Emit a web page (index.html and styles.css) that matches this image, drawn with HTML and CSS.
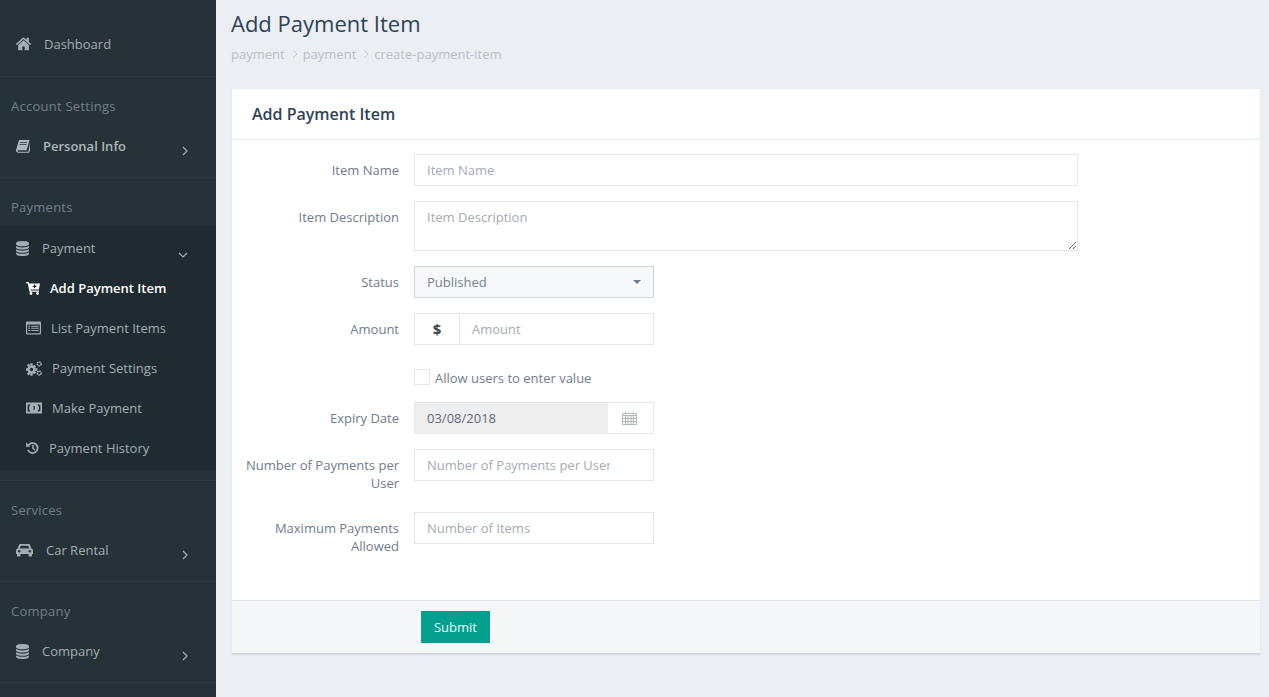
FILE: index.html
```html
<!DOCTYPE html>
<html lang="en">
<head>
<meta charset="utf-8">
<title>Add Payment Item</title>
<link rel="stylesheet" href="styles.css">
</head>
<body>
<div class="app">
  <aside class="sidebar">
    <section class="side-top">
      <a class="nav-item"><svg class="ic w15" viewBox="96 192 1600 1408" preserveAspectRatio="none"><path d="M1472 992v480q0 26-19 45t-45 19h-384v-384h-256v384h-384q-26 0-45-19t-19-45v-480q0-1 .5-3t.5-3l575-474 575 474q1 2 1 6zm223-69l-62 74q-8 9-21 11h-3q-13 0-21-7l-692-577-692 577q-12 8-24 7-13-2-21-11l-62-74q-8-10-7-23.5t11-21.5l719-599q32-26 76-26t76 26l244 204v-195q0-14 9-23t23-9h192q14 0 23 9t9 23v408l219 182q10 8 11 21.5t-7 23.5z"/></svg><span>Dashboard</span></a>
    </section>
    <section class="side-sec">
      <h4 class="side-head">Account Settings</h4>
      <a class="nav-item semi"><svg class="ic w14" viewBox="0 0 14 14"><path d="M3 1h10.5l-.3 1-2.6 9.300H2.400c-.7 0-1 .5-.8 1 .1.300.4.500.8.500h9.400c.3 0 .6-.2.700-.5L14 3v8.500l-1 2.200H2.400C1 13.700 0 12.700 0 11.500c0-.3 0-.5.100-.7zM4.300 3.200l-.2.800h6.800l.2-.8zm-.6 2.100l-.2.800h6.800l.2-.8z" fill-rule="evenodd"/></svg><span>Personal Info</span><svg class="chev" viewBox="0 0 8 10"><path d="M2 1l4 4-4 4"/></svg></a>
    </section>
    <section class="side-sec side-open">
      <h4 class="side-head">Payments</h4>
      <div class="open-block">
        <a class="nav-item"><svg class="ic db" viewBox="128 0 1536 1792" preserveAspectRatio="none"><path d="M896 768q237 0 443-43t325-127v170q0 69-103 128t-280 93.500-385 34.500-385-34.500-280-93.500-103-128v-170q119 84 325 127t443 43zm0 768q237 0 443-43t325-127v170q0 69-103 128t-280 93.500-385 34.500-385-34.500-280-93.500-103-128v-170q119 84 325 127t443 43zm0-384q237 0 443-43t325-127v170q0 69-103 128t-280 93.500-385 34.500-385-34.500-280-93.500-103-128v-170q119 84 325 127t443 43zm0-1152q208 0 385 34.500t280 93.500 103 128v128q0 69-103 128t-280 93.500-385 34.500-385-34.500-280-93.500-103-128v-128q0-69 103-128t280-93.500 385-34.500z"/></svg><span>Payment</span><svg class="chev down" viewBox="0 0 10 8"><path d="M1 2l4 4 4-4"/></svg></a>
        <a class="sub-item active"><svg class="ic w14" viewBox="0 0 14 14"><path d="M0 1h2.600l.5 1.500H14l-1.200 6H4.500l.2 1H13v1.300H3.500L1.700 2.300H0z"/><circle cx="5" cy="12.500" r="1.400"/><circle cx="11.500" cy="12.500" r="1.400"/><path d="M8 3.500h1.200v1.300h1.300V6H9.200v1.300H8V6H6.700V4.800H8z" fill="#1f2b31"/></svg><span>Add Payment Item</span></a>
        <a class="sub-item"><svg class="ic w15" viewBox="0 0 15 13"><path fill-rule="evenodd" d="M1 0h13a1 1 0 0 1 1 1v11a1 1 0 0 1-1 1H1a1 1 0 0 1-1-1V1a1 1 0 0 1 1-1zm.2 3v8.800h12.600V3zM2.300 4.200h2v1h-2zm3 0h7.400v1H5.300zM2.300 6.300h2v1h-2zm3 0h7.400v1H5.300zM2.300 8.400h2v1h-2zm3 0h7.400v1H5.300z"/></svg><span>List Payment Items</span></a>
        <a class="sub-item"><svg class="ic cog" viewBox="0 0 16 15"><g><circle cx="5.500" cy="8.500" r="4.200"/><path d="M4.300 2.300h2.400v2.400H4.300zM4.300 12.300h2.400v2.400H4.300zM-.5 7.300h2.400v2.400H-.5zM9.100 7.300h2.400v2.400H9.100zM.9 4.200l1.700-1.700 1.700 1.700-1.700 1.700zM6.700 11.500l1.700-1.700 1.700 1.700-1.700 1.700zM.9 12.800l1.700 1.700 1.700-1.700-1.700-1.700zM6.700 5.500l1.700 1.700 1.700-1.700-1.700-1.700z"/></g><circle cx="5.500" cy="8.500" r="1.700" fill="#1f2b31"/><circle cx="13.200" cy="2.900" r="1.900" fill="none" stroke="currentColor" stroke-width="1.500" stroke-dasharray="1.500 .5"/><circle cx="13.200" cy="12.100" r="1.900" fill="none" stroke="currentColor" stroke-width="1.500" stroke-dasharray="1.500 .5"/></svg><span>Payment Settings</span></a>
        <a class="sub-item"><svg class="ic w16" viewBox="0 0 16 11"><path fill-rule="evenodd" d="M0 0h16v11H0zm1.800 1.800v7.400h1a1.500 1.500 0 0 0-1-1zM2.500 2a1.500 1.500 0 0 1-.9.900v5.200a1.500 1.500 0 0 1 .9.900H4.500A5.200 5.200 0 0 1 4.500 2zM11.500 2a5.200 5.200 0 0 1 0 7h2a1.500 1.500 0 0 1 .9-.9V2.900a1.500 1.500 0 0 1-.9-.9z"/><ellipse cx="8" cy="5.500" rx="3" ry="3.500"/><path d="M7.500 3.500h1.200v3.800h-1.200z" fill="#1f2b31"/></svg><span>Make Payment</span></a>
        <a class="sub-item"><svg class="ic w13" viewBox="0 0 13 13"><path d="M2.200 4.200A5 5 0 1 1 2 8.500" fill="none" stroke="currentColor" stroke-width="1.800"/><path d="M0 1l4.300 4.200H0z"/><path d="M6.200 3.500h1.500v3.200l1.800 1.200-.8 1.100-2.500-1.700z"/></svg><span>Payment History</span></a>
      </div>
    </section>
    <section class="side-sec">
      <h4 class="side-head">Services</h4>
      <a class="nav-item"><svg class="ic w17" viewBox="0 0 17 13"><path fill-rule="evenodd" d="M4.500 0h8c.8 0 1.400.5 1.700 1.200L15.300 4.500c1 .3 1.700 1.200 1.700 2.300v3.200h-1v1.500a1 1 0 0 1-1 1h-1.500a1 1 0 0 1-1-1V10H4.500v1.500a1 1 0 0 1-1 1H2a1 1 0 0 1-1-1V10H0V6.800c0-1.100.7-2 1.700-2.300L2.800 1.200C3.100.5 3.700 0 4.500 0zm.3 1.700L3.800 4.500h9.400l-1-2.800zM3.200 6a1.300 1.300 0 1 0 0 2.600 1.300 1.300 0 0 0 0-2.600zm10.600 0a1.300 1.300 0 1 0 0 2.600 1.300 1.300 0 0 0 0-2.600z"/></svg><span>Car Rental</span><svg class="chev" viewBox="0 0 8 10"><path d="M2 1l4 4-4 4"/></svg></a>
    </section>
    <section class="side-sec">
      <h4 class="side-head">Company</h4>
      <a class="nav-item"><svg class="ic db" viewBox="128 0 1536 1792" preserveAspectRatio="none"><path d="M896 768q237 0 443-43t325-127v170q0 69-103 128t-280 93.500-385 34.500-385-34.500-280-93.500-103-128v-170q119 84 325 127t443 43zm0 768q237 0 443-43t325-127v170q0 69-103 128t-280 93.500-385 34.500-385-34.500-280-93.500-103-128v-170q119 84 325 127t443 43zm0-384q237 0 443-43t325-127v170q0 69-103 128t-280 93.500-385 34.500-385-34.500-280-93.500-103-128v-170q119 84 325 127t443 43zm0-1152q208 0 385 34.500t280 93.500 103 128v128q0 69-103 128t-280 93.500-385 34.500-385-34.500-280-93.500-103-128v-128q0-69 103-128t280-93.500 385-34.500z"/></svg><span>Company</span><svg class="chev" viewBox="0 0 8 10"><path d="M2 1l4 4-4 4"/></svg></a>
    </section>
  </aside>
  <main class="content">
    <header class="page-head">
      <h1 class="page-title">Add Payment Item</h1>
      <nav class="crumbs"><span>payment</span><svg class="crumb-sep" viewBox="0 0 6 8"><path d="M1.500 .5L5 4 1.500 7.500"/></svg><span>payment</span><svg class="crumb-sep" viewBox="0 0 6 8"><path d="M1.500 .5L5 4 1.500 7.500"/></svg><span>create-payment-item</span></nav>
    </header>
    <div class="card">
      <div class="card-head"><h2 class="card-title">Add Payment Item</h2></div>
      <form class="card-body">
        <div class="row"><label class="lbl">Item Name</label><div class="ctl wide"><input class="inp" placeholder="Item Name"></div></div>
        <div class="row"><label class="lbl">Item Description</label><div class="ctl wide"><textarea class="inp area" placeholder="Item Description"></textarea></div></div>
        <div class="row"><label class="lbl">Status</label><div class="ctl narrow"><div class="select"><span>Published</span><i class="caret"></i></div></div></div>
        <div class="row"><label class="lbl">Amount</label><div class="ctl narrow group"><span class="addon">$</span><input class="inp join-left" placeholder="Amount"></div></div>
        <div class="row check-row"><div class="lbl-empty"></div><label class="check"><span class="box"></span><span>Allow users to enter value</span></label></div>
        <div class="row"><label class="lbl">Expiry Date</label><div class="ctl narrow group"><input class="inp date" value="03/08/2018" readonly><span class="addon cal"><svg class="cal-ic" viewBox="0 0 15 14"><path d="M.5 2.500h14v11H.5zM.5 4.500h14M3.500 .5v3M11.500 .5v3M3.500 4.500v9M6 4.500v9M9 4.500v9M11.500 4.500v9M.5 7.500h14M.5 10.500h14"/></svg></span></div></div>
        <div class="row"><label class="lbl">Number of Payments per User</label><div class="ctl narrow"><input class="inp clip" placeholder="Number of Payments per User"></div></div>
        <div class="row last"><label class="lbl">Maximum Payments Allowed</label><div class="ctl narrow"><input class="inp" placeholder="Number of Items"></div></div>
      </form>
      <div class="card-foot"><button class="btn" type="button">Submit</button></div>
    </div>
  </main>
</div>
</body>
</html>
```

FILE: styles.css
```css
* { box-sizing: border-box; }
html, body { margin: 0; height: 100%; }
body {
  font-family: "Open Sans", "Noto Sans", sans-serif;
  font-size: 13px;
  line-height: 18px;
  background: #ebeef3;
  color: #6b7a8a;
  overflow: hidden;
}
.app { display: flex; height: 697px; }

/* Sidebar */
.sidebar { width: 216px; flex: none; background: #263238; color: #a3adb3; overflow: hidden; }
.side-top { height: 77px; padding-top: 24px; border-bottom: 1px solid #2e3b43; }
.side-sec { padding: 19px 0 11px; border-bottom: 1px solid #2e3b43; }
.side-open { padding-bottom: 10px; }
.side-head { margin: 0 0 10px; height: 20px; padding-left: 11px; font-size: 13px; font-weight: 400; line-height: 20px; letter-spacing: .25px; color: #727f88; }
.side-open .side-head { margin-bottom: 9px; }
.open-block { background: #1f2b31; padding: 2px 0; }
.nav-item { display: flex; align-items: center; height: 40px; padding-left: 16px; gap: 13px; }
.semi { font-weight: 600; color: #aeb7bc; }
.sub-item { display: flex; align-items: center; height: 40px; padding-left: 26px; gap: 10px; }
.active { color: #fff; font-weight: 600; }
.ic { flex: none; fill: currentColor; display: block; }
.w13 { width: 13px; height: 14px; }
.w14 { width: 14px; height: 14px; }
.w15 { width: 15px; height: 14px; }
.w16 { width: 16px; height: 12px; }
.w17 { width: 17px; height: 13px; }
.db { width: 13px; height: 15px; }
.cog { width: 16px; height: 15px; }
.chev { width: 8px; height: 10px; margin-left: auto; margin-right: 27px; margin-top: 9px; fill: none; stroke: #a3adb3; stroke-width: 1.200; }
.chev.down { width: 10px; height: 8px; margin-right: 28px; margin-top: 13px; }

/* Content */
.content { flex: 1; min-width: 0; padding: 0 9px 0 15px; }
.page-head { height: 89px; padding-top: 7px; }
.page-title { margin: 0; font-size: 22px; font-weight: 400; line-height: 32px; color: #2f4356; }
.crumbs { display: flex; align-items: center; margin-top: 6px; color: #b9c0c8; }
.crumb-sep { width: 6px; height: 8px; margin: 0 5px 0 7px; fill: none; stroke: #c3c9d0; stroke-width: 1; }

.card { background: #fff; border-bottom: 1px solid #cfd2d6; box-shadow: 0 1px 1px rgba(0, 0, 0, .08); margin-left: 1px; }
.card-head { height: 51px; border-bottom: 1px solid #e6e9ed; padding: 0 20px; display: flex; align-items: center; }
.card-title { margin: 0; font-size: 16px; font-weight: 600; color: #2f4356; }
.card-body { padding: 14px 0 0; height: 460px; }
.row { display: flex; margin-bottom: 15px; }
.last { margin-bottom: 0; }
.lbl { width: 167px; flex: none; text-align: right; padding: 7px 0 5px; color: #6f7d8c; }
.lbl-empty { width: 167px; flex: none; }
.ctl { margin-left: 15px; }
.wide { width: 664px; }
.narrow { width: 240px; }
.group { display: flex; }
.inp {
  display: block; width: 100%; height: 32px; padding: 0 12px;
  border: 1px solid #e3e6ea; border-radius: 0; background: #fff;
  font: inherit; color: #6f7d8c; outline: none;
}
.inp::placeholder { color: #a3abb3; opacity: 1; }
.clip { padding-right: 43px; }
.area { height: 50px; padding-top: 6px; resize: vertical; }
.select {
  display: flex; align-items: center; justify-content: space-between;
  height: 32px; padding: 0 12px; background: #f7f8fa;
  border: 1px solid #cfd6dc; color: #75838f;
}
.caret { width: 0; height: 0; border-left: 4px solid transparent; border-right: 4px solid transparent; border-top: 4px solid #6f7d8c; }
.addon {
  flex: none; width: 46px; height: 32px; display: flex; align-items: center; justify-content: center;
  border: 1px solid #e3e6ea; background: #fff; color: #3b4650; font-weight: 700; font-size: 15px;
}
.join-left { border-left: 0; flex: 1; min-width: 0; }
.date { flex: 1; min-width: 0; background: #eee; color: #5f6b75; border-right: 0; }
.cal { border-left: 0; padding-right: 2px; }
.cal-ic { width: 15px; height: 14px; fill: none; stroke: #b3b8bd; stroke-width: 1; }
.check-row { height: 42px; margin-bottom: 0; padding-top: 9px; }
.check { display: flex; align-items: flex-start; margin-left: 15px; color: #6f7d8c; }
.box { width: 16px; height: 16px; border: 1px solid #e3e6ea; background: #fff; margin-right: 5px; }
.card-foot { height: 53px; background: #f6f7f9; border-top: 1px solid #e1e4e8; padding: 10px 0 0 189px; }
.btn {
  display: block; width: 69px; height: 32px; border: 0; border-radius: 0; padding: 0;
  background: #04a08f; color: #e8f8f6; font: inherit; cursor: pointer;
}
```
